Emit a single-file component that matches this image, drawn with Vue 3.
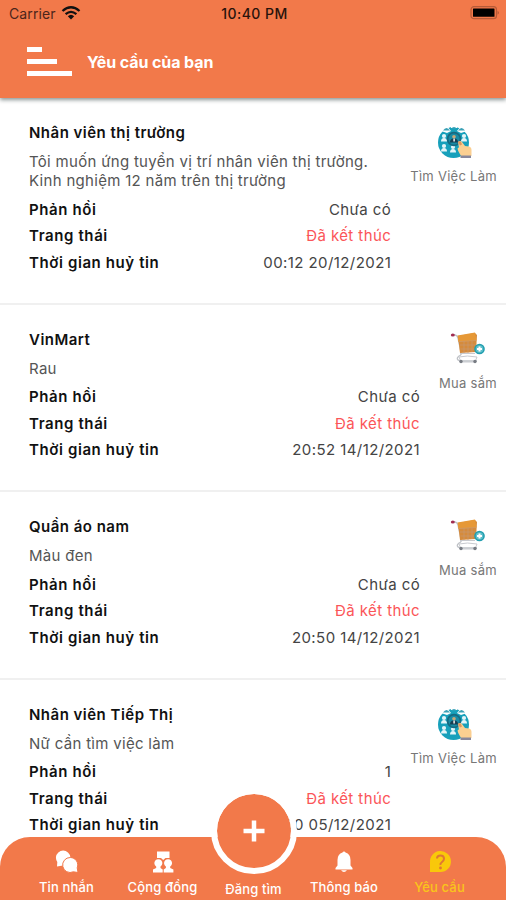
<script setup>
const requests = [
  { title: 'Nhân viên thị trường', lines: ['Tôi muốn ứng tuyển vị trí nhân viên thị trường.', 'Kinh nghiệm 12 năm trên thị trường'], reply: 'Chưa có', time: '00:12 20/12/2021', kind: 'job' },
  { title: 'VinMart', lines: ['Rau'], reply: 'Chưa có', time: '20:52 14/12/2021', kind: 'shop' },
  { title: 'Quần áo nam', lines: ['Màu đen'], reply: 'Chưa có', time: '20:50 14/12/2021', kind: 'shop' },
  { title: 'Nhân viên Tiếp Thị', lines: ['Nữ cần tìm việc làm'], reply: '1', time: '10:00 05/12/2021', kind: 'job' },
]
const people = [[8, 12], [28, 12], [8, 22], [17, 23]]
</script>

<template>
  <div class="screen">
    <header class="header">
      <div class="status">
        <div class="carrier">
          <span>Carrier</span>
          <svg class="wifi" width="20" height="14" viewBox="0 0 20 14" fill="none" stroke="#111" stroke-width="2.3">
            <path d="M1.500 5Q10-2.500 18.500 5M4.600 8.200Q10 3.600 15.400 8.200" />
            <path d="M6.800 10.300Q10 7.200 13.200 10.300L10 13.500Z" fill="#111" stroke="none" />
          </svg>
        </div>
        <div class="clock">10:40 PM</div>
        <div class="power">
          <svg width="30" height="14" viewBox="0 0 30 14">
            <rect x="1" y=".7" width="25.500" height="12" rx="3" fill="none" stroke="#b65a38" stroke-width="1.200" />
            <rect x="3" y="2.600" width="21.500" height="8.200" rx=".5" fill="#000" />
            <path d="M27.700 4.700q2 2 0 4z" fill="#9a4c30" />
          </svg>
        </div>
      </div>
      <div class="titlebar">
        <div class="menu"><i class="bar short" /><i class="bar mid" /><i class="bar" /></div>
        <h1>Yêu cầu của bạn</h1>
      </div>
    </header>

    <main class="list">
      <article v-for="r in requests" :key="r.title" class="card">
        <div class="body">
          <h2>{{ r.title }}</h2>
          <p class="desc"><span v-for="l in r.lines" :key="l">{{ l }}</span></p>
          <div class="row"><b>Phản hồi</b><span>{{ r.reply }}</span></div>
          <div class="row"><b>Trang thái</b><span class="ended">Đã kết thúc</span></div>
          <div class="row"><b>Thời gian huỷ tin</b><span>{{ r.time }}</span></div>
        </div>
        <aside class="side">
          <svg v-if="r.kind === 'job'" width="36" height="36" viewBox="0 0 36 36">
            <circle cx="17.500" cy="18.500" r="15.500" fill="#17a0bb" />
            <path d="M5 2h6l4 5-4 2-6-2zM31 2h-6l-4 5 4 2 6-2zM15 1h6v3h-6z" fill="#fff" />
            <path d="M7 6.500q3.500-5 7 0zM22 6.500q3.500-5 7 0zM15 4.500q3-3 6 0z" fill="#3ba1b6" />
            <g v-for="p in people" :key="p.join()" fill="#e4f5f9">
              <circle :cx="p[0]" :cy="p[1]" r="2.100" />
              <path :d="`M${p[0] - 3} ${p[1] + 5.5}q0-3.500 3-3.500t3 3.500z`" />
            </g>
            <circle cx="18" cy="15" r="6.400" fill="#178ba5" stroke="#176a82" stroke-width="1.800" />
            <circle cx="18" cy="12.700" r="1.800" fill="#c9a878" />
            <path d="M14 18.500q0-4 4-4t4 4z" fill="#173e52" />
            <path d="M17.400 14.500h1.400v3h-1.400z" fill="#fff" />
            <path d="M22 18q2-2 4 0l3 4 4 .5q2.500.5 2.500 3.500v6H25l-2.500-4.500q-2-4 .5-4z" fill="#fbcf91" />
            <path d="M22 18q1.500-1.500 3 0l1 2.500-2 1z" fill="#e0955e" />
            <path d="M24.500 31.500H35V34H24.500z" fill="#88879b" />
          </svg>
          <svg v-else width="36" height="36" viewBox="0 0 36 36">
            <path d="M3 4q4-1 5 3l3 14q1 3-2 4-4 3 1 5h17" fill="none" stroke="#bfc2c7" stroke-width="1.300" />
            <path d="M8 5l17-3 2 2-1 17-16 1z" fill="#d58b3c" />
            <path d="M7.500 4.500L25 1.500l1.500 8L8.500 11z" fill="#e69836" />
            <path d="M9 10.500l17-1M10 14h16M10.500 18H25M14 10v12M18 10v12M22 10v11" fill="none" stroke="#c99a70" stroke-width=".7" />
            <path d="M10 22.500h15M9 26q8-2 18 0l-2 5H11z" fill="none" stroke="#c8cacf" />
            <ellipse cx="2.800" cy="4" rx="2" ry="1.600" fill="#a12c51" />
            <circle cx="11" cy="30.500" r="1.700" fill="#777b83" /><circle cx="25" cy="30.500" r="1.700" fill="#777b83" />
            <circle cx="29.500" cy="18" r="5.300" fill="#219eaf" />
            <circle cx="29.500" cy="18" r="3.800" fill="#5dbfcb" />
            <path d="M29.500 15.500v5M27 18h5" stroke="#fff" stroke-width="2" />
          </svg>
          <span class="label">{{ r.kind === 'job' ? 'Tìm Việc Làm' : 'Mua sắm' }}</span>
        </aside>
      </article>
    </main>

    <nav class="tabs">
      <div class="tab">
        <svg width="24" height="24" viewBox="0 0 24 24" fill="#fff">
          <path d="M2 16.500l.3-4.500a7.200 7.200 0 1 1 11.700 0L8 15.500z" />
          <path d="M15.300 7.500a7.500 7.500 0 0 1 6.900 10.300l.8 4.700-4.700-.7A7.500 7.500 0 1 1 15.300 7.500z" stroke="#f2794a" stroke-width="1" />
        </svg>
        <span>Tin nhắn</span>
      </div>
      <div class="tab">
        <svg width="24" height="24" viewBox="0 0 24 24" fill="#fff">
          <path d="M6 1.500h12.500v6.500h-4L12.200 10 10 8H6z" />
          <path d="M2 22.500v-3l3.200-1.500v-1.500a4 4 0 1 1 4.300 0V18l2.200 1.500v3zM12.700 22.500v-3l2.200-1.500v-1.500a4 4 0 1 1 4.300 0V18l3.200 1.500v3z" />
        </svg>
        <span>Cộng đồng</span>
      </div>
      <div class="tab post"><span>Đăng tìm</span></div>
      <div class="tab">
        <svg width="24" height="24" viewBox="0 0 24 24" fill="#fff">
          <path d="M10.500 2.500a1.600 1.600 0 0 1 3 0Q18.500 4 18.500 10v5.500l2 2.500v1.500h-17V18l2-2.500V10q0-6 5-7.500zM9 20.200h6q-3 3.600-6 0z" />
        </svg>
        <span>Thông báo</span>
      </div>
      <div class="tab active">
        <svg width="24" height="24" viewBox="0 0 24 24">
          <path d="M2 22v-9.500A10.500 10.500 0 1 1 12.500 22z" fill="#f9c80a" />
          <path d="M9 8.500Q9 5.500 12.500 5.500T16 8.800Q16 10.500 14 12T12.500 15" fill="none" stroke="#e07733" stroke-width="2" />
          <circle cx="12.500" cy="18" r="1.400" fill="#e07733" />
        </svg>
        <span>Yêu cầu</span>
      </div>
    </nav>
    <button class="fab" aria-label="Đăng tìm">
      <svg width="22" height="22" viewBox="0 0 22 22"><path d="M11 .5v21M.5 11h21" stroke="#fff" stroke-width="4.500" /></svg>
    </button>
  </div>
</template>

<style>
body { margin: 0; overflow: hidden; }
</style>
<style scoped>
* { box-sizing: border-box; }
.screen { position: relative; width: 506px; height: 900px; overflow: hidden; background: #fff; font-family: Inter, "Noto Sans", sans-serif; color: #111; display: flex; flex-direction: column; }
.header { position: relative; z-index: 1; flex: none; height: 98px; background: #f2794a; box-shadow: 0 2px 4px rgba(0, 25, 25, .45); }
.status { height: 26px; display: grid; grid-template-columns: 1fr auto 1fr; align-items: center; padding: 0 6px 0 9px; font-size: 14px; }
.carrier { display: flex; align-items: center; gap: 5px; color: #4c251b; letter-spacing: .1px; }
.clock { font-weight: 500; letter-spacing: .45px; color: #28130c; }
.power { display: flex; justify-content: flex-end; }
.titlebar { display: flex; align-items: center; height: 71px; padding-left: 27px; gap: 15px; }
.menu { width: 45px; display: flex; flex-direction: column; gap: 7px; }
.bar { height: 5.200px; background: #fff; }
.short { width: 15px; }
.mid { width: 30px; }
h1 { margin: 0; font-size: 16px; font-weight: 700; color: #fff; letter-spacing: -.1px; }
.list { flex: 1; overflow: hidden; }
.card { display: flex; gap: 19px; padding: 25px 9px 27px 29px; border-bottom: 2px solid #f0f0f0; }
.body { flex: 1; }
h2 { margin: 0; font-size: 15px; line-height: 20px; font-weight: 600; letter-spacing: .48px; white-space: nowrap; }
.desc { margin: 9px 0 6px; display: flex; flex-direction: column; font-size: 15px; line-height: 19px; color: #555; white-space: nowrap; letter-spacing: .3px; }
.row { height: 26.500px; display: flex; justify-content: space-between; align-items: center; font-size: 15px; color: #444; letter-spacing: .42px; }
.row b { font-weight: 600; color: #111; letter-spacing: .6px; }
.row .ended { color: #fb5558; }
.side { display: flex; flex-direction: column; align-items: center; padding-top: 1px; }
.label { margin-top: 7px; font-size: 13px; line-height: 18px; color: #777; white-space: nowrap; letter-spacing: .28px; }
.tabs { position: absolute; left: 0; right: 0; bottom: 0; height: 63px; border-radius: 30px 30px 0 0; background: #f2794a; display: grid; grid-template-columns: 95px 97px 85px 96px 95px; padding: 13px 19px 0; }
.tab { display: flex; flex-direction: column; align-items: center; gap: 4px; color: #fff; font-size: 13px; line-height: 18px; font-weight: 500; white-space: nowrap; letter-spacing: .15px; }
.post { padding-top: 30px; }
.active { color: #f9c51a; }
.fab { position: absolute; left: 210.500px; top: 788px; width: 86px; height: 86px; padding: 0; border: 6.300px solid #fff; border-radius: 50%; background: #f2794a; background-clip: padding-box; display: grid; place-items: center; }
</style>
